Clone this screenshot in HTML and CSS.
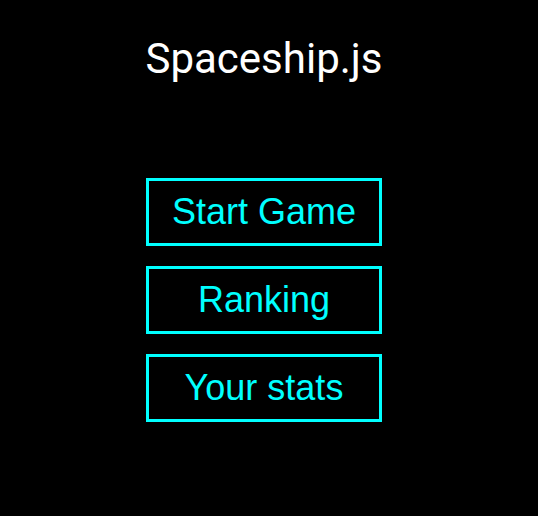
FILE: index.html
```html
<!DOCTYPE html>
<html>
<head>
<meta charset="utf-8">
<link rel="stylesheet" href="styles.css">
</head>
<body>
<div class="menu">
  <h1 class="title">Spaceship.js</h1>
  <div class="buttons">
    <button class="btn">Start Game</button>
    <button class="btn">Ranking</button>
    <button class="btn">Your stats</button>
  </div>
</div>
</body>
</html>
```
FILE: styles.css
```css
html, body {
  margin: 0;
  padding: 0;
  background: #000;
  height: 100%;
}
.menu {
  width: 236px;
  margin-left: 146px;
  padding-top: 34px;
  display: flex;
  flex-direction: column;
  align-items: center;
}
.title {
  margin: 0;
  font-family: Roboto, sans-serif;
  font-weight: 400;
  font-size: 42px;
  line-height: 49px;
  color: #fff;
  white-space: nowrap;
}
.buttons {
  margin-top: 95px;
  display: flex;
  flex-direction: column;
  gap: 20px;
  width: 100%;
}
.btn {
  box-sizing: border-box;
  width: 236px;
  height: 68px;
  margin: 0;
  padding: 0;
  background: #000;
  border: 3px solid #00ffff;
  color: #00ffff;
  font-family: "Liberation Sans", Arial, sans-serif;
  font-size: 36px;
  line-height: normal;
  cursor: pointer;
}
```
